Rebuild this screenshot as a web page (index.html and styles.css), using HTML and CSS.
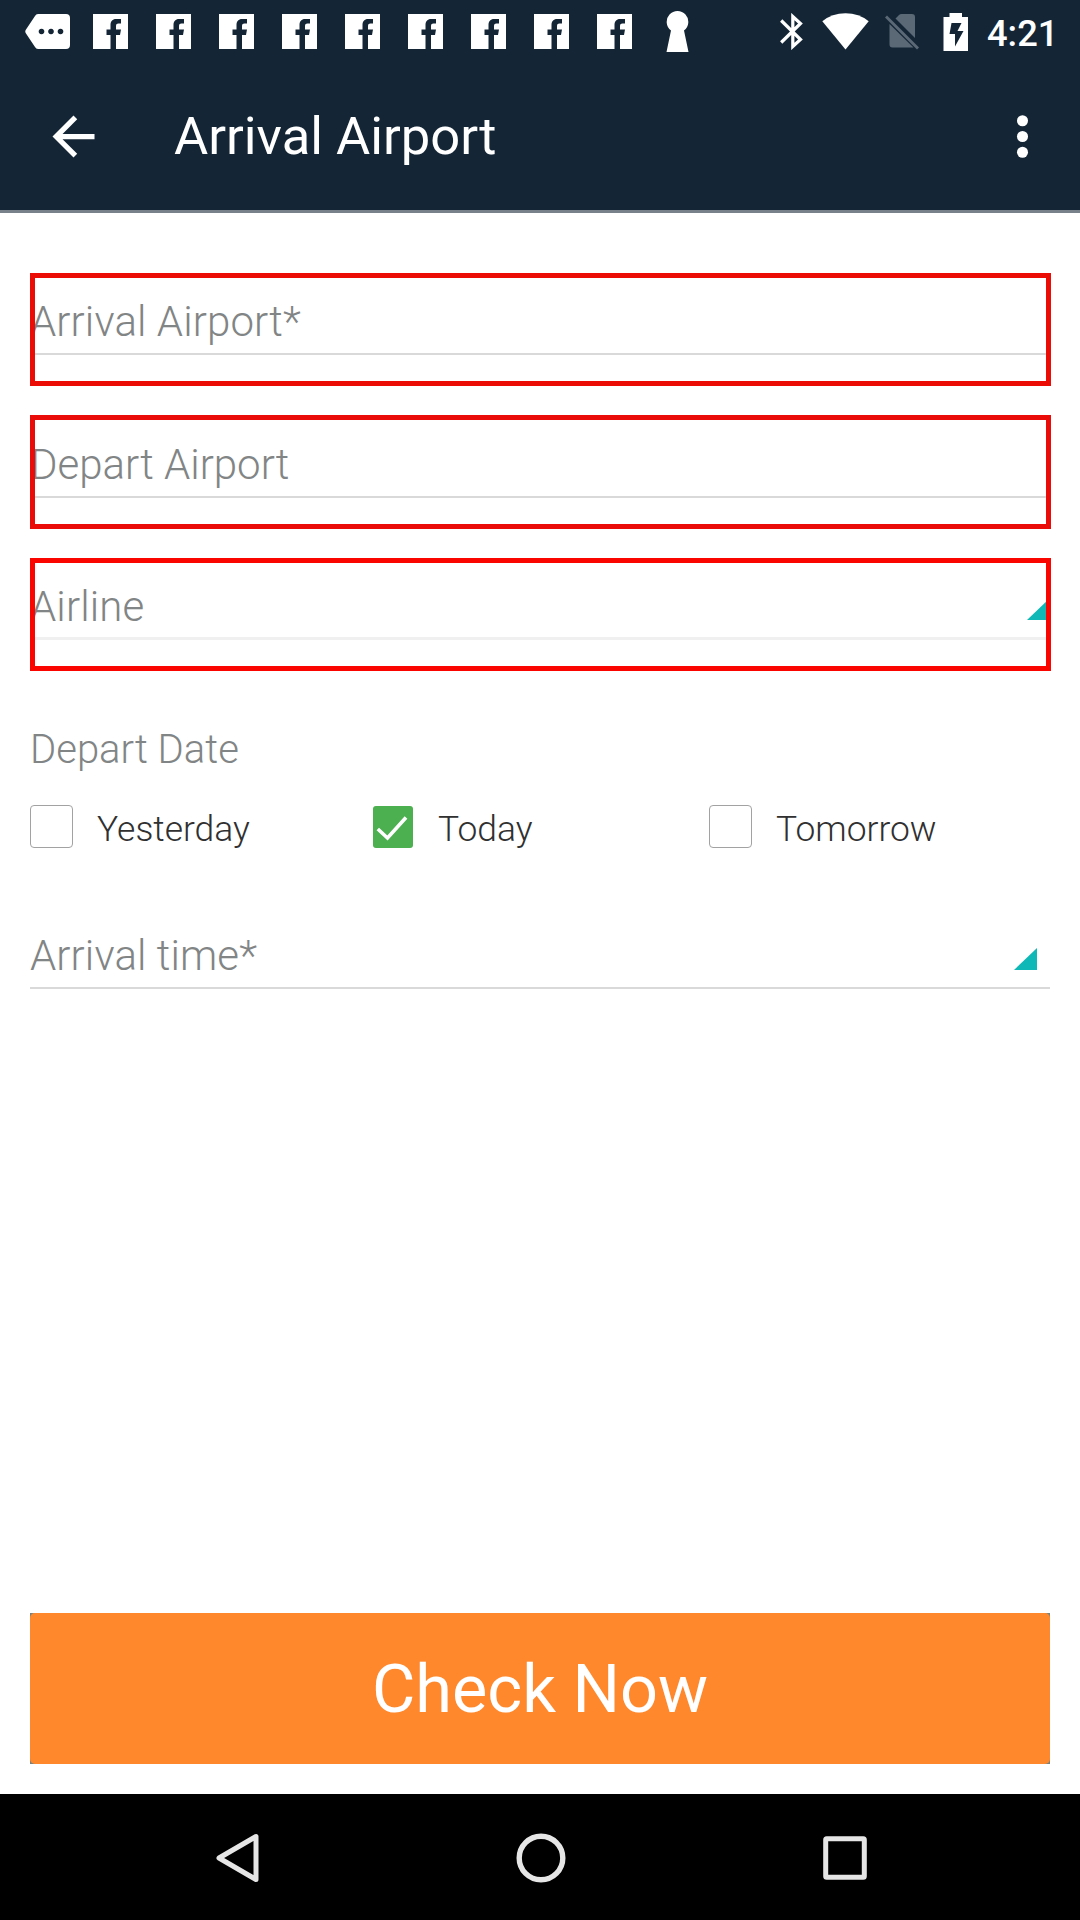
FILE: index.html
```html
<!DOCTYPE html>
<html lang="en">
<head>
<meta charset="utf-8">
<title>Arrival Airport</title>
<link rel="stylesheet" href="styles.css">
</head>
<body>
<svg class="sprite" width="0" height="0" aria-hidden="true">
  <symbol id="fb" viewBox="0 0 35 35"><path fill="currentColor" d="M0 0H35V35H23V21H27L28 15.500H23V12C23 10.300 23.800 9.500 25.500 9.500H28V5H23C19.500 5 17.500 7.500 17.500 11V15.500H13.500V21H17.500V35H0Z"/></symbol>
</svg>
<div class="screen">
  <header class="header">
    <div class="status">
      <div class="notifications">
        <span class="slot"><svg width="45" height="35" viewBox="0 0 45 35"><path fill="currentColor" fill-rule="evenodd" d="M13 0H41Q45 0 45 4V31Q45 35 41 35H13Q11 35 10 33L1 19.500Q-.5 17.500 1 15.500L10 2Q11 0 13 0ZM16.500 14.700a2.800 2.800 0 1 0 .01 0ZM26 14.700a2.800 2.800 0 1 0 .01 0ZM35.500 14.700a2.800 2.800 0 1 0 .01 0Z"/></svg></span>
        <span class="slot"><svg width="35" height="35"><use href="#fb"/></svg></span>
        <span class="slot"><svg width="35" height="35"><use href="#fb"/></svg></span>
        <span class="slot"><svg width="35" height="35"><use href="#fb"/></svg></span>
        <span class="slot"><svg width="35" height="35"><use href="#fb"/></svg></span>
        <span class="slot"><svg width="35" height="35"><use href="#fb"/></svg></span>
        <span class="slot"><svg width="35" height="35"><use href="#fb"/></svg></span>
        <span class="slot"><svg width="35" height="35"><use href="#fb"/></svg></span>
        <span class="slot"><svg width="35" height="35"><use href="#fb"/></svg></span>
        <span class="slot"><svg width="35" height="35"><use href="#fb"/></svg></span>
        <span class="slot"><svg width="23" height="41" viewBox="0 0 23 41"><path fill="currentColor" d="M5 19.500A10.800 10.800 0 1 1 18 19.500L22.500 41H.5Z"/></svg></span>
      </div>
      <div class="system">
        <svg class="bluetooth" width="23" height="37" viewBox="0 0 23 37"><path fill="none" stroke="currentColor" stroke-width="3.200" d="M1.200 7.500 20.500 26.500 12.800 33.500V3.500L20.500 10.500 1.200 29.500"/></svg>
        <svg class="wifi" width="47" height="37" viewBox="0 0 47 37"><path fill="currentColor" d="M.3 8.300Q10 .3 23.500 .3T46.700 8.300L23.500 36.500Z"/></svg>
        <svg class="sim" width="34" height="36" viewBox="0 0 34 36"><path fill="#5b6875" d="M10.500 4.500 14 1Q15 0 16.500 0H27Q30 0 30 3V24ZM4.500 10 28.500 33.500H7.500Q4.500 33.500 4.500 30.500Z"/><path stroke="#5b6875" stroke-width="2.800" d="M1 2.500 33 34.500"/></svg>
        <svg class="battery" width="26" height="38" viewBox="0 0 26 38"><path fill="currentColor" fill-rule="evenodd" d="M6.500 0H19V4H25V38H.5V4H6.500ZM8.500 10 6.500 21H12V33.500L20.500 18H14.500L18.500 10Z"/></svg>
        <span class="clock">4:21</span>
      </div>
    </div>
    <div class="toolbar">
      <svg class="back" width="63" height="63" viewBox="0 0 24 24"><path fill="currentColor" d="M20 11H7.830l5.590-5.590L12 4l-8 8 8 8 1.410-1.410L7.830 13H20v-2z"/></svg>
      <h1 class="title">Arrival Airport</h1>
      <svg class="more" width="63" height="63" viewBox="0 0 24 24"><g fill="currentColor"><circle cx="12" cy="6" r="2.100"/><circle cx="12" cy="12" r="2.100"/><circle cx="12" cy="18" r="2.100"/></g></svg>
    </div>
  </header>

  <main class="form">
    <div class="field field-arrival"><div class="input">Arrival Airport*</div></div>
    <div class="field field-depart"><div class="input">Depart Airport</div></div>
    <div class="field field-airline"><div class="input">Airline<svg class="corner" width="23" height="22" viewBox="0 0 23 22"><path fill="#0eb8b6" d="M23 0V22H0Z"/></svg></div></div>

    <div class="label">Depart Date</div>
    <div class="options">
      <div class="option"><span class="box"></span><span>Yesterday</span></div>
      <div class="option"><span class="box checked"><svg width="40" height="42" viewBox="0 0 40 42"><path fill="none" stroke="#fff" stroke-width="3.600" d="M4.800 23 14.500 32 33 11.500"/></svg></span><span>Today</span></div>
      <div class="option"><span class="box"></span><span>Tomorrow</span></div>
    </div>

    <div class="input time">Arrival time*<svg class="corner" width="23" height="22" viewBox="0 0 23 22"><path fill="#0eb8b6" d="M23 0V22H0Z"/></svg></div>

    <div class="submit"><button class="button" type="button">Check Now</button></div>
  </main>

  <nav class="navbar">
    <svg width="50" height="50" viewBox="0 0 50 50"><path fill="none" stroke="currentColor" stroke-width="5" stroke-linejoin="round" d="M44 3.500V46.500L7 25Z"/></svg>
    <svg width="50" height="50" viewBox="0 0 50 50"><circle cx="25" cy="25" r="21.800" fill="none" stroke="currentColor" stroke-width="5.400"/></svg>
    <svg width="50" height="50" viewBox="0 0 50 50"><rect x="5.700" y="5.700" width="38.600" height="38.600" rx="1" fill="none" stroke="currentColor" stroke-width="5"/></svg>
  </nav>
</div>
</body>
</html>
```
FILE: styles.css
```css
* { box-sizing: border-box; }
body { margin: 0; background: #fff; font-family: Roboto, "Liberation Sans", sans-serif; }
svg { display: block; flex: none; }
.sprite { position: absolute; }
.screen { width: 1080px; height: 1920px; display: flex; flex-direction: column; overflow: hidden; }

.header { height: 213px; background: #142636; border-bottom: 3px solid #78808a; color: #fff; }
.status { height: 63px; display: flex; justify-content: space-between; padding: 0 24px 0 16px; }
.notifications, .system { display: flex; align-items: center; }
.slot { width: 63px; display: flex; justify-content: center; }
.wifi { margin-left: 19px; }
.sim { margin-left: 16px; }
.battery { margin-left: 24px; }
.clock { width: 69px; margin-left: 18px; font-size: 36.250px; font-weight: 500; line-height: 42px; padding-top: 4px; }

.toolbar { height: 147px; display: flex; align-items: center; padding: 0 26px 0 42px; }
.title { margin: 0 auto 0 69px; padding-bottom: 2px; font-size: 52.500px; font-weight: 400; line-height: 62px; white-space: nowrap; }

.form { flex: 1; display: flex; flex-direction: column; padding: 60px 30px 30px; }
.field { width: 1021px; height: 113px; margin-bottom: 29px; outline: 5px solid #ec0c06; outline-offset: -5px; }
.field-depart { height: 114px; padding-top: 1px; outline-color: #e90c09; }
.field-airline { outline-color: #fa0500; }
.field .input { height: 82px; padding-top: 17px; }
.field-airline .input { border-bottom: 3px solid #f0f0f0; }
.input { width: 1020px; display: flex; justify-content: space-between; border-bottom: 2px solid #d9d9d9; color: #828585; font-size: 42px; font-weight: 300; line-height: 63px; letter-spacing: .1px; }
.field-depart .input { letter-spacing: 0; }
.corner { margin: 23px 0 0; }
.label { margin-top: 18px; color: #828585; font-size: 40px; font-weight: 300; line-height: 63px; }

.options { display: grid; grid-template-columns: 343px 336px 1fr; margin-top: 24px; color: #303030; font-size: 35.400px; font-weight: 300; line-height: 42px; }
.option { display: flex; gap: 24px; }
.option span:last-child { padding-top: 3px; }
.box { width: 43px; height: 43px; border: 1px solid #a2a2a2; border-radius: 4px; }
.box.checked { width: 40px; height: 42px; margin: 1px 1px 0 0; border: 0; background: #4caf50; border-radius: 3px; }
.options { height: 43px; }
.time { margin-top: 76px; height: 65px; }
.time .corner { margin: 24px 13px 0 0; }

.submit { height: 151px; margin-top: auto; background: #77827f; }
.button { display: block; width: 100%; height: 100%; padding: 2px 0 0; border: 0; border-radius: 5px; background: #ff882d; color: #fff; font-family: inherit; font-size: 66.600px; font-weight: 400; line-height: 149px; text-align: center; }

.navbar { height: 126px; display: flex; align-items: center; justify-content: center; gap: 254px; padding: 1px 0 0 1px; background: #000; color: #e6e6e6; }
```
